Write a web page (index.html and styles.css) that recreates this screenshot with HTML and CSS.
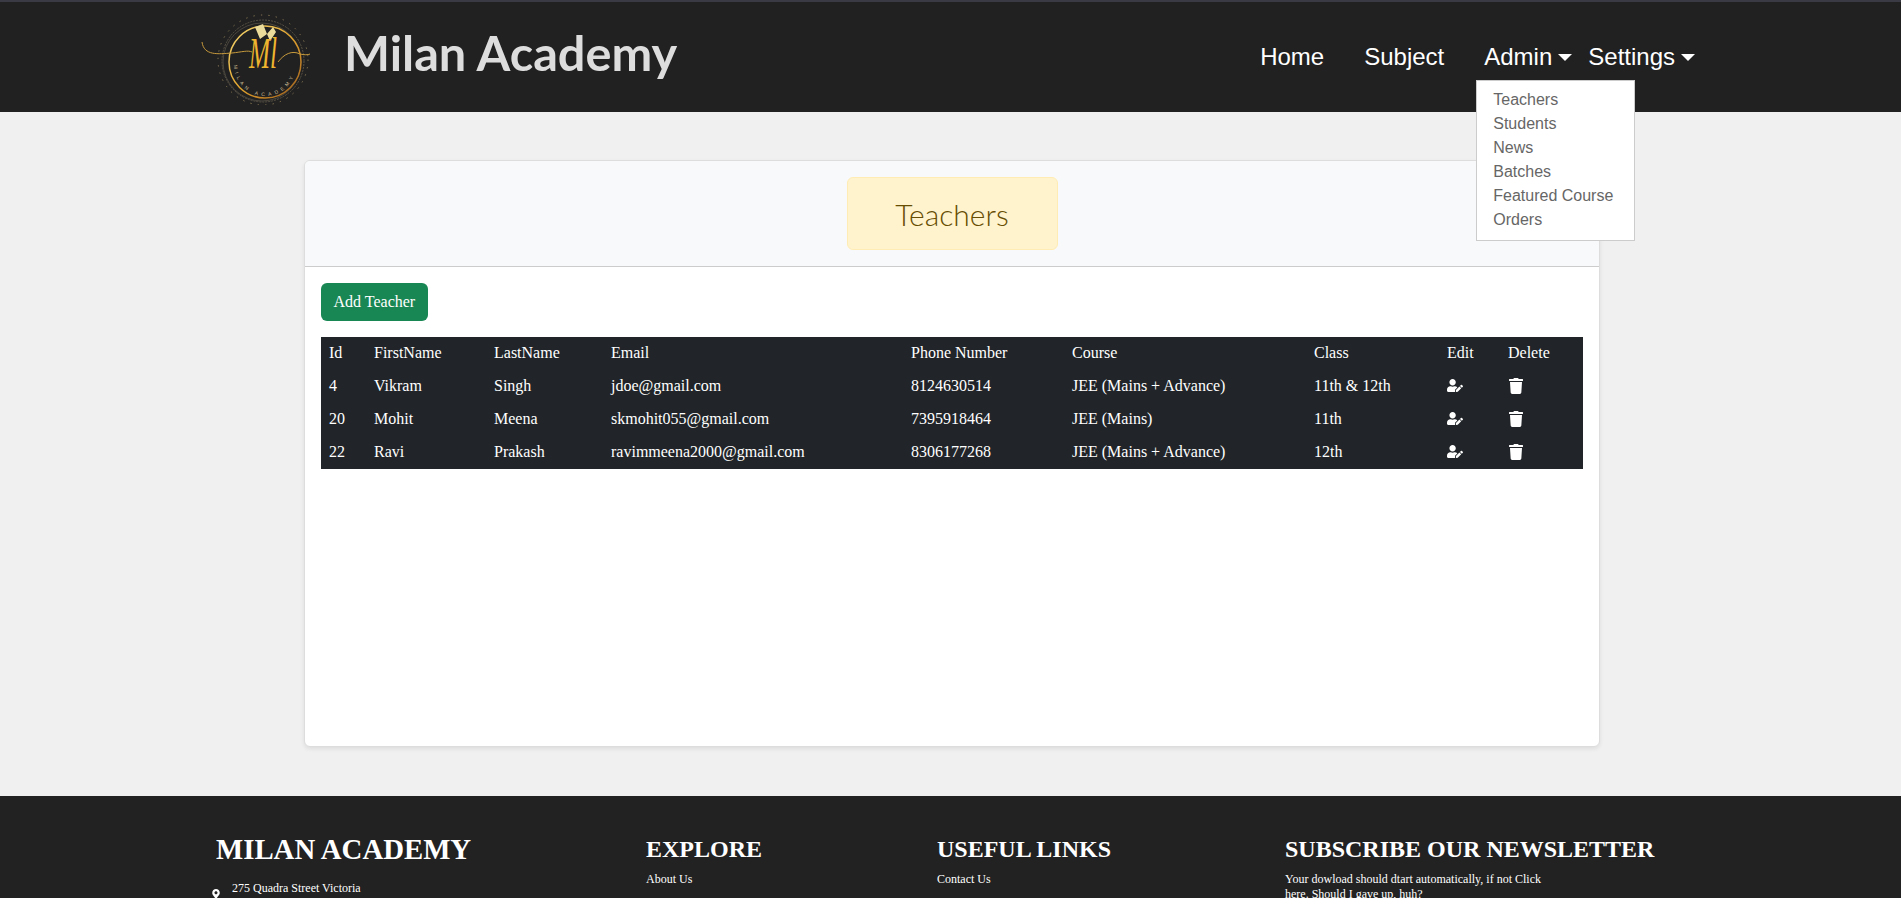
FILE: index.html
```html
<!DOCTYPE html>
<html>
    <head>
        <title>Teachers</title>
        <link rel="stylesheet" href="styles.css">
    </head>
    <body>
        <nav class="navbar">
            <svg class="logo" viewBox="0 0 112 95" width="112" height="95">
                <defs>
                    <linearGradient id="gold" x1="0" y1="0" x2="1" y2="1">
                        <stop offset="0" stop-color="#f3d774"/>
                        <stop offset="0.5" stop-color="#e3a52e"/>
                        <stop offset="1" stop-color="#9a5a1c"/>
                    </linearGradient>
                    <path id="arc" d="M34 55 A31 31 0 0 0 96 55"/>
                </defs>
                <circle class="dots" cx="63" cy="50" r="45"/>
                <circle cx="63" cy="51" r="41" fill="none" stroke="#5a5346" stroke-width="1" stroke-dasharray="2 1"/>
                <circle cx="62" cy="52" r="39" fill="none" stroke="#4a463e" stroke-width="1"/>
                <circle cx="65" cy="52" r="36" fill="none" stroke="url(#gold)" stroke-width="1.5"/>
                <path d="M2 32 C4 46 18 44 32 43 C42 42 48 40 52 42 M78 52 C84 44 92 40 100 44 C104 45 108 45 110 44" fill="none" stroke="#c79a3c" stroke-width="1"/>
                <path d="M55 17 L63 14 L67 24 L60 29 Z M67 24 L73 17 L76 22 L70 31 Z" fill="#ecdc9c"/>
                <text class="logo-mt" x="49" y="58" textLength="28" lengthAdjust="spacingAndGlyphs">Ml</text>
                <text class="logo-name"><textPath href="#arc">MILAN ACADEMY</textPath></text>
            </svg>
            <a class="brand" href="#">Milan Academy</a>
            <ul class="nav">
                <li><a href="#">Home</a></li>
                <li><a href="#">Subject</a></li>
                <li class="drop">
                    <a class="caret" href="#">Admin</a>
                    <div class="menu">
                        <a href="#">Teachers</a>
                        <a href="#">Students</a>
                        <a href="#">News</a>
                        <a href="#">Batches</a>
                        <a href="#">Featured Course</a>
                        <a href="#">Orders</a>
                    </div>
                </li>
                <li class="drop"><a class="caret" href="#">Settings</a></li>
            </ul>
        </nav>

        <main class="page">
            <div class="card">
                <div class="card-header">
                    <div class="alert">Teachers</div>
                </div>
                <div class="card-body">
                    <a class="btn" href="#">Add Teacher</a>
                    <table class="table">
                        <colgroup>
                            <col class="c-id"><col class="c-first"><col class="c-last"><col class="c-email"><col class="c-phone">
                            <col class="c-course"><col class="c-class"><col class="c-edit"><col class="c-del">
                        </colgroup>
                        <thead>
                            <tr>
                                <th>Id</th><th>FirstName</th><th>LastName</th><th>Email</th><th>Phone Number</th>
                                <th>Course</th><th>Class</th><th>Edit</th><th>Delete</th>
                            </tr>
                        </thead>
                        <tbody>
                            <tr>
                                <td>4</td><td>Vikram</td><td>Singh</td><td>jdoe@gmail.com</td><td>8124630514</td>
                                <td>JEE (Mains + Advance)</td><td>11th &amp; 12th</td>
                                <td><svg class="i-edit" viewBox="0 0 640 512"><path d="M224 256c70.7 0 128-57.3 128-128S294.7 0 224 0 96 57.3 96 128s57.3 128 128 128zm89.6 32h-16.7c-22.2 10.2-46.9 16-72.9 16s-50.6-5.8-72.9-16h-16.7C60.2 288 0 348.2 0 422.4V464c0 26.5 21.5 48 48 48h274.9c-2.4-6.8-3.4-14-2.6-21.3l6.8-60.9 1.2-11.1 7.9-7.9 77.3-77.3c-24.5-27.7-60-45.5-99.9-45.5zm45.3 145.3l-6.8 61c-1.1 10.2 7.5 18.8 17.6 17.6l60.9-6.8 137.9-137.9-71.7-71.7-137.9 137.8zM633 268.9L595.1 231c-9.3-9.3-24.5-9.3-33.8 0l-37.8 37.8-4.1 4.1 71.8 71.7 41.8-41.8c9.3-9.4 9.3-24.5 0-33.9z"/></svg></td>
                                <td><svg class="i-trash" viewBox="0 0 448 512"><path d="M432 32H312l-9.4-18.7A24 24 0 0 0 281.1 0H166.8a23.72 23.72 0 0 0-21.4 13.3L136 32H16A16 16 0 0 0 0 48v32a16 16 0 0 0 16 16h416a16 16 0 0 0 16-16V48a16 16 0 0 0-16-16zM53.2 467a48 48 0 0 0 47.9 45h245.8a48 48 0 0 0 47.9-45L416 128H32z"/></svg></td>
                            </tr>
                            <tr>
                                <td>20</td><td>Mohit</td><td>Meena</td><td>skmohit055@gmail.com</td><td>7395918464</td>
                                <td>JEE (Mains)</td><td>11th</td>
                                <td><svg class="i-edit" viewBox="0 0 640 512"><path d="M224 256c70.7 0 128-57.3 128-128S294.7 0 224 0 96 57.3 96 128s57.3 128 128 128zm89.6 32h-16.7c-22.2 10.2-46.9 16-72.9 16s-50.6-5.8-72.9-16h-16.7C60.2 288 0 348.2 0 422.4V464c0 26.5 21.5 48 48 48h274.9c-2.4-6.8-3.4-14-2.6-21.3l6.8-60.9 1.2-11.1 7.9-7.9 77.3-77.3c-24.5-27.7-60-45.5-99.9-45.5zm45.3 145.3l-6.8 61c-1.1 10.2 7.5 18.8 17.6 17.6l60.9-6.8 137.9-137.9-71.7-71.7-137.9 137.8zM633 268.9L595.1 231c-9.3-9.3-24.5-9.3-33.8 0l-37.8 37.8-4.1 4.1 71.8 71.7 41.8-41.8c9.3-9.4 9.3-24.5 0-33.9z"/></svg></td>
                                <td><svg class="i-trash" viewBox="0 0 448 512"><path d="M432 32H312l-9.4-18.7A24 24 0 0 0 281.1 0H166.8a23.72 23.72 0 0 0-21.4 13.3L136 32H16A16 16 0 0 0 0 48v32a16 16 0 0 0 16 16h416a16 16 0 0 0 16-16V48a16 16 0 0 0-16-16zM53.2 467a48 48 0 0 0 47.9 45h245.8a48 48 0 0 0 47.9-45L416 128H32z"/></svg></td>
                            </tr>
                            <tr>
                                <td>22</td><td>Ravi</td><td>Prakash</td><td>ravimmeena2000@gmail.com</td><td>8306177268</td>
                                <td>JEE (Mains + Advance)</td><td>12th</td>
                                <td><svg class="i-edit" viewBox="0 0 640 512"><path d="M224 256c70.7 0 128-57.3 128-128S294.7 0 224 0 96 57.3 96 128s57.3 128 128 128zm89.6 32h-16.7c-22.2 10.2-46.9 16-72.9 16s-50.6-5.8-72.9-16h-16.7C60.2 288 0 348.2 0 422.4V464c0 26.5 21.5 48 48 48h274.9c-2.4-6.8-3.4-14-2.6-21.3l6.8-60.9 1.2-11.1 7.9-7.9 77.3-77.3c-24.5-27.7-60-45.5-99.9-45.5zm45.3 145.3l-6.8 61c-1.1 10.2 7.5 18.8 17.6 17.6l60.9-6.8 137.9-137.9-71.7-71.7-137.9 137.8zM633 268.9L595.1 231c-9.3-9.3-24.5-9.3-33.8 0l-37.8 37.8-4.1 4.1 71.8 71.7 41.8-41.8c9.3-9.4 9.3-24.5 0-33.9z"/></svg></td>
                                <td><svg class="i-trash" viewBox="0 0 448 512"><path d="M432 32H312l-9.4-18.7A24 24 0 0 0 281.1 0H166.8a23.72 23.72 0 0 0-21.4 13.3L136 32H16A16 16 0 0 0 0 48v32a16 16 0 0 0 16 16h416a16 16 0 0 0 16-16V48a16 16 0 0 0-16-16zM53.2 467a48 48 0 0 0 47.9 45h245.8a48 48 0 0 0 47.9-45L416 128H32z"/></svg></td>
                            </tr>
                        </tbody>
                    </table>
                </div>
            </div>
        </main>

        <footer class="footer">
            <div class="f-col">
                <h2 class="f-brand">MILAN ACADEMY</h2>
                <p class="address">
                    <svg class="i-pin" viewBox="0 0 384 512"><path d="M172.268 501.67C26.97 291.031 0 269.413 0 192 0 85.961 85.961 0 192 0s192 85.961 192 192c0 77.413-26.97 99.031-172.268 309.67-9.535 13.774-29.93 13.773-39.464 0zM192 272c44.183 0 80-35.817 80-80s-35.817-80-80-80-80 35.817-80 80 35.817 80 80 80z"/></svg>
                    275 Quadra Street Victoria
                </p>
            </div>
            <div class="f-col">
                <h3>EXPLORE</h3>
                <a href="#">About Us</a>
            </div>
            <div class="f-col">
                <h3>USEFUL LINKS</h3>
                <a href="#">Contact Us</a>
            </div>
            <div class="f-col">
                <h3>SUBSCRIBE OUR NEWSLETTER</h3>
                <p class="news">Your dowload should dtart automatically, if not Click here. Should I gave up, huh?</p>
            </div>
        </footer>
    </body>
</html>
```

FILE: styles.css
```css
html, body {
    height: 100%;
    overflow: hidden;
}
body {
    margin: 0;
    background: #f0f0f0;
    font-family: "Liberation Serif", serif;
    font-size: 16px;
    color: #fff;
}
a {
    color: inherit;
    text-decoration: none;
}

/* top bar */
.navbar {
    display: flex;
    align-items: center;
    height: 110px;
    padding-left: 200px;
    background: #212121;
    border-top: 2px solid #3a3a44;
}
.logo {
    flex: none;
}
.dots {
    fill: none;
    stroke: #8a7a55;
    stroke-width: 1;
    stroke-linecap: round;
    stroke-dasharray: 0.5 7;
}
.logo-mt {
    font-family: "Liberation Serif", serif;
    font-style: italic;
    font-size: 44px;
    fill: #eeb42f;
}
.logo-name {
    font-family: "Liberation Sans", sans-serif;
    font-size: 5px;
    letter-spacing: 3.6px;
    fill: #cdbd94;
}
.brand {
    margin-left: 32px;
    margin-bottom: 10px;
    font-family: Lato, sans-serif;
    font-weight: 700;
    font-size: 48.7px;
    color: #ddd;
}
.nav {
    display: flex;
    list-style: none;
    margin: 0 190px 0 auto;
    padding: 0;
    font-family: "Liberation Sans", sans-serif;
    font-size: 24px;
}
.nav > li {
    position: relative;
    padding: 0 20px;
}
.nav > .drop {
    padding: 0 16px 0 0;
}
.nav > li:nth-child(3) {
    padding-left: 20px;
}
.caret::after {
    content: "";
    display: inline-block;
    margin-left: 6px;
    vertical-align: 4px;
    border-top: 7px solid #fff;
    border-left: 7px solid transparent;
    border-right: 7px solid transparent;
}
.menu {
    position: absolute;
    top: 37px;
    left: 12px;
    display: flex;
    flex-direction: column;
    width: 141px;
    padding: 7px 0 8px 16px;
    background: #fff;
    border: 1px solid #ccc;
    font-size: 16px;
    line-height: 24px;
    color: #666;
}

/* content */
.page {
    padding: 48px 301px 49px 304px;
}
.card {
    height: 585px;
    background: #fff;
    border: 1px solid #ddd;
    border-radius: 6px;
    box-shadow: 0 2px 4px rgba(0, 0, 0, .08);
    overflow: hidden;
}
.card-header {
    display: flex;
    justify-content: center;
    padding: 16px 0;
    background: #f8f9fa;
    border-bottom: 1px solid #ccc;
}
.alert {
    display: flex;
    align-items: center;
    justify-content: center;
    width: 211px;
    height: 73px;
    box-sizing: border-box;
    background: #fff3cd;
    border: 1px solid #ffecb5;
    border-radius: 6px;
    font-family: Lato, sans-serif;
    font-weight: 300;
    font-size: 30px;
    color: #664d03;
}
.card-body {
    padding: 16px;
}
.btn {
    display: inline-block;
    padding: 7px 12.5px;
    line-height: 24px;
    background: #198754;
    border-radius: 6px;
}
.table {
    width: 1262px;
    margin-top: 16px;
    table-layout: fixed;
    border-collapse: collapse;
    background: #212529;
}
.table th, .table td {
    height: 33px;
    padding: 0 8px;
    text-align: left;
    font-weight: normal;
}
.table th {
    height: 32px;
}
.table tbody tr:last-child td {
    height: 33px;
    padding-bottom: 1px;
}
.c-id { width: 45px; }
.c-first { width: 120px; }
.c-last { width: 117px; }
.c-email { width: 300px; }
.c-phone { width: 161px; }
.c-course { width: 242px; }
.c-class { width: 133px; }
.c-edit { width: 61px; }
.c-del { width: 83px; }
.i-edit {
    display: block;
    width: 16px;
    height: 13px;
    fill: #fff;
}
.i-trash {
    display: block;
    width: 14px;
    height: 16px;
    margin-left: 1px;
    fill: #fff;
}

/* footer */
.footer {
    display: grid;
    grid-template-columns: 434px 291px 348px 1fr;
    height: 300px;
    padding: 39px 0 0 212px;
    background: #222;
    font-size: 12px;
}
.f-col h2, .f-col h3 {
    margin: 0 0 9px;
    font-size: 24px;
    line-height: 28px;
}
.f-col .f-brand {
    padding-left: 4px;
    font-size: 28.8px;
    margin-bottom: 18px;
}
.address {
    display: flex;
    align-items: flex-end;
    gap: 12px;
    margin: 0;
}
.i-pin {
    width: 8px;
    height: 10px;
    margin-bottom: -3px;
    fill: #fff;
}
.news {
    width: 270px;
    margin: 0;
    line-height: 15px;
}
```
